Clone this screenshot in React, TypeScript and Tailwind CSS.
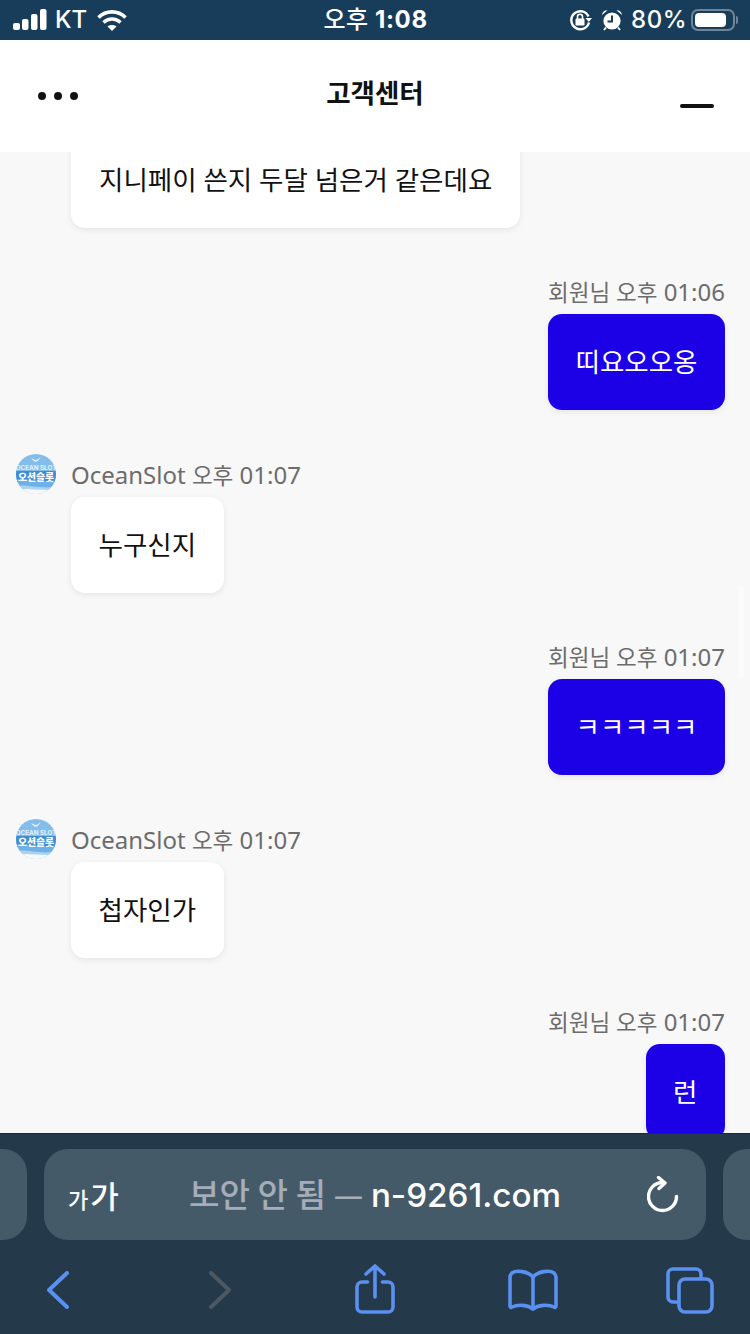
const FONT = "font-['Noto_Sans','Noto_Sans_CJK_KR',sans-serif]";

function StatusBar() {
  return (
    <div className="flex h-10 shrink-0 items-center bg-[#183d5a] text-white">
      <div className="flex flex-1 items-center pl-[13px]">
        <svg width="34" height="22" viewBox="0 0 34 22" fill="#fff">
          <rect x="0" y="14" width="7" height="7" rx="2" />
          <rect x="9" y="10" width="6.5" height="11" rx="2" />
          <rect x="18" y="5" width="6.5" height="16" rx="2" />
          <rect x="27" y="0" width="6.5" height="21" rx="2" />
        </svg>
        <span className="ml-2 font-['Inter',sans-serif] text-[24px] leading-none font-medium">KT</span>
        <svg className="ml-[10px]" width="30" height="22" viewBox="0 0 30 22" fill="none" stroke="#fff" strokeWidth="3.6">
          <path d="M1.5 8.5C9 1 21 1 28.5 8.5" />
          <path d="M6.5 13.5C11.5 8.8 18.5 8.8 23.5 13.5" />
          <path d="M10.5 17.5C13 15.5 17 15.5 19.5 17.5L15 22z" fill="#fff" stroke="none" />
        </svg>
      </div>
      <span className="font-['Inter','Noto_Sans_CJK_KR',sans-serif] text-[24px] leading-none font-bold tracking-[0.6px]">
        <span className="font-medium">오후</span> 1:08
      </span>
      <div className="flex flex-1 items-center justify-end pr-[12px]">
        <svg width="23" height="22" viewBox="0 0 23 22" fill="none">
          <path d="M19.5 7.5A9 9 0 1 0 20 13.5" stroke="#fff" strokeWidth="2.4" />
          <path d="M16.5 9h6.5l-3.2 4z" fill="#fff" />
          <rect x="6.5" y="9.5" width="9" height="7" rx="1.2" fill="#fff" />
          <path d="M8.5 10V7.8a2.5 2.5 0 0 1 5 0V10" stroke="#fff" strokeWidth="1.6" />
        </svg>
        <svg className="ml-[9px]" width="22" height="22" viewBox="0 0 22 22" fill="none">
          <circle cx="11" cy="12" r="8.6" fill="#fff" />
          <path d="M11 6.5V12.5H6.5" stroke="#183d5a" strokeWidth="2" />
          <path d="M1 6C1.5 2.5 3.5 1 6.5 1.2zM21 6C20.5 2.5 18.5 1 15.5 1.2z" fill="#fff" />
          <path d="M5 18.5L3 21M17 18.5L19 21" stroke="#fff" strokeWidth="2" />
        </svg>
        <span className="ml-2 font-['Inter',sans-serif] text-[24px] leading-none font-medium tracking-[0.5px]">80%</span>
        <div className="ml-1 flex items-center">
          <div className="h-[22px] w-[44px] rounded-[7px] border-2 border-[#6d8599] p-[2px]">
            <div className="h-full w-[31px] rounded-[4px] bg-white" />
          </div>
          <div className="ml-[1px] h-[8px] w-[2px] rounded-r-sm bg-[#6d8599]" />
        </div>
      </div>
    </div>
  );
}

function Header() {
  return (
    <div className="grid h-28 shrink-0 grid-cols-3 items-center bg-white pr-[36px] pl-[38px]">
      <div className="flex gap-2">
        <span className="size-2 rounded-full bg-[#111]" />
        <span className="size-2 rounded-full bg-[#111]" />
        <span className="size-2 rounded-full bg-[#111]" />
      </div>
      <div className="mt-[-5px] -ml-[2px] text-center text-[26.5px] leading-none font-bold text-[#111]">고객센터</div>
      <div className="flex justify-end">
        <span className="mt-[19px] h-1 w-[34px] rounded-full bg-[#111]" />
      </div>
    </div>
  );
}

function Avatar() {
  return (
    <svg className="mt-[-7px] shrink-0" width="40" height="40" viewBox="0 0 40 40">
      <defs>
        <clipPath id="avatarClip">
          <circle cx="20" cy="20" r="20" />
        </clipPath>
      </defs>
      <g clipPath="url(#avatarClip)">
        <rect width="40" height="40" fill="#82bdec" />
        <path d="M0 17H40V28H0z" fill="#3f8dd4" />
        <path d="M0 26C12 24 28 30 40 26V33C28 36 12 30 0 33z" fill="#6fb0e8" />
        <path d="M0 32C12 30 28 36 40 32V36C28 38 14 33 0 37z" fill="#a9d3f3" />
        <path d="M0 36C14 33 28 38 40 35V40H0z" fill="#f7f9fb" />
        <path d="M15 4l5 2.4 5-3.4-4 4.6-2.5 0z" fill="#fff" />
        <text x="20" y="15.5" textAnchor="middle" fontSize="6.3" fontWeight="700" fill="#e4f2fc" fontFamily="Inter, sans-serif">OCEAN SLOT</text>
        <text x="20" y="26.5" textAnchor="middle" fontSize="9.8" fontWeight="900" fill="#fff" fontFamily="'Noto Sans CJK KR', sans-serif">오션슬롯</text>
      </g>
    </svg>
  );
}

function Received({ name, time, text }: { name: string; time: string; text: string }) {
  return (
    <div className="mb-[50.5px] flex gap-[15px] pl-4">
      <Avatar />
      <div>
        <div className="h-9 text-[24px] leading-7 text-[#6c6c6c]">
          {name} <span className="text-[22.5px]">오후</span> {time}
        </div>
        <div className="h-24 w-fit rounded-[14px] bg-white px-[27.5px] text-[26.5px] leading-24 text-[#111] shadow-[0_2px_6px_rgba(0,0,0,0.08)]">
          {text}
        </div>
      </div>
    </div>
  );
}

function Sent({ time, text }: { time: string; text: string }) {
  return (
    <div className="mb-[50.5px] flex flex-col items-end pr-[25px]">
      <div className="h-9 w-fit text-[24px] leading-7 text-[#6c6c6c]">
        <span className="text-[22.5px]">회원님 오후</span> {time}
      </div>
      <div className="h-24 rounded-[14px] bg-[#1c00e6] px-[27.5px] text-[26.5px] leading-24 text-white shadow-[0_2px_6px_rgba(0,0,0,0.08)]">
        {text}
      </div>
    </div>
  );
}

function ChatLog() {
  return (
    <div className="relative min-h-0 flex-1 overflow-hidden bg-[#f8f8f8]">
      <div className="-mt-5">
        <div className="mb-[50px] ml-[71px] h-24 w-[449px] rounded-[14px] bg-white px-7 text-[26.5px] leading-24 whitespace-nowrap text-[#111] shadow-[0_2px_6px_rgba(0,0,0,0.08)]">
          지니페이 쓴지 두달 넘은거 같은데요
        </div>
        <Sent time="01:06" text="띠요오오옹" />
        <Received name="OceanSlot" time="01:07" text="누구신지" />
        <Sent time="01:07" text="ㅋㅋㅋㅋㅋ" />
        <Received name="OceanSlot" time="01:07" text="첩자인가" />
        <Sent time="01:07" text="런" />
      </div>
      {/* scroll indicator */}
      <div className="absolute top-[434px] right-[6px] h-[92px] w-[6px] rounded-full bg-[#fbfbfb]" />
    </div>
  );
}

function AddressBar() {
  return (
    <div className="flex h-[91px] gap-[17px] overflow-hidden">
      <div className="w-[27px] shrink-0 rounded-r-[24px] bg-[#455a69]" />
      <div className="flex w-[662px] shrink-0 items-center rounded-[24px] bg-[#455a69] pr-[27px] pl-6">
        <div className="flex w-[121px] items-baseline font-['Noto_Sans_CJK_KR',sans-serif] font-medium text-white">
          <span className="text-[22px] leading-none">가</span>
          <span className="ml-[2px] text-[31px] leading-none">가</span>
        </div>
        <div className="flex-1 font-['Inter','Noto_Sans_CJK_KR',sans-serif] text-[33.2px] leading-none whitespace-nowrap text-[#a4adb8]">
          <span className="font-['Noto_Sans_CJK_KR',sans-serif] font-medium">보안 안 됨 — </span>
          <span className="font-medium text-white">n-9261.com</span>
        </div>
        <svg width="32" height="38" viewBox="0 0 32 38" fill="none" stroke="#fff" strokeWidth="3.4" strokeLinecap="round" strokeLinejoin="round">
          <path d="M29.5 20.5A14 14 0 1 1 15.5 6.5" />
          <path d="M11.5 1.5L18 7l-6 5.5" />
        </svg>
      </div>
      <div className="w-[28px] shrink-0 rounded-l-[24px] bg-[#455a69]" />
    </div>
  );
}

function Toolbar() {
  return (
    <div className="flex flex-1 items-center pt-[6px]">
      <svg className="ml-[47px]" width="22" height="38" viewBox="0 0 22 38" fill="none" stroke="#5a90f0" strokeWidth="4" strokeLinecap="round" strokeLinejoin="round">
        <path d="M20 2L2 19l18 17" />
      </svg>
      <svg className="ml-[140px]" width="22" height="38" viewBox="0 0 22 38" fill="none" stroke="#4c5862" strokeWidth="4" strokeLinecap="round" strokeLinejoin="round">
        <path d="M2 2l18 17L2 36" />
      </svg>
      <svg className="mb-[3px] ml-[124px]" width="40" height="50" viewBox="0 0 40 50" fill="none" stroke="#5a90f0" strokeWidth="3.6" strokeLinecap="round" strokeLinejoin="round">
        <path d="M12.5 18H7a5 5 0 0 0-5 5v20a5 5 0 0 0 5 5h26a5 5 0 0 0 5-5V23a5 5 0 0 0-5-5h-5.5" />
        <path d="M20 33V2M11 10l9-8 9 8" />
      </svg>
      <svg className="ml-[113px]" width="50" height="42" viewBox="0 0 50 42" fill="none" stroke="#5a90f0" strokeWidth="3.6" strokeLinecap="round" strokeLinejoin="round">
        <path d="M25 8C20 2 8 1 4 4c-1 1-2 2-2 4v29c0 1 1 2 2 1 6-3 16-2 21 2 5-4 15-5 21-2 1 1 2 0 2-1V8c0-2-1-3-2-4-4-3-16-2-21 4z" />
        <path d="M25 8v32" />
      </svg>
      <svg className="ml-[108px]" width="48" height="47" viewBox="0 0 48 47" fill="none" stroke="#5a90f0" strokeWidth="3.6" strokeLinecap="round" strokeLinejoin="round">
        <path d="M11 35H7a5 5 0 0 1-5-5V7a5 5 0 0 1 5-5h23a5 5 0 0 1 5 5v4" />
        <rect x="13" y="12" width="33" height="33" rx="6" />
      </svg>
    </div>
  );
}

export default function App() {
  return (
    <div className={`flex h-[1334px] w-[750px] flex-col overflow-hidden ${FONT}`}>
      <StatusBar />
      <Header />
      <ChatLog />
      <div className="flex h-[201px] shrink-0 flex-col border-t border-[#1b2a36] bg-[#24394a] pt-[15px]">
        <AddressBar />
        <Toolbar />
      </div>
    </div>
  );
}
